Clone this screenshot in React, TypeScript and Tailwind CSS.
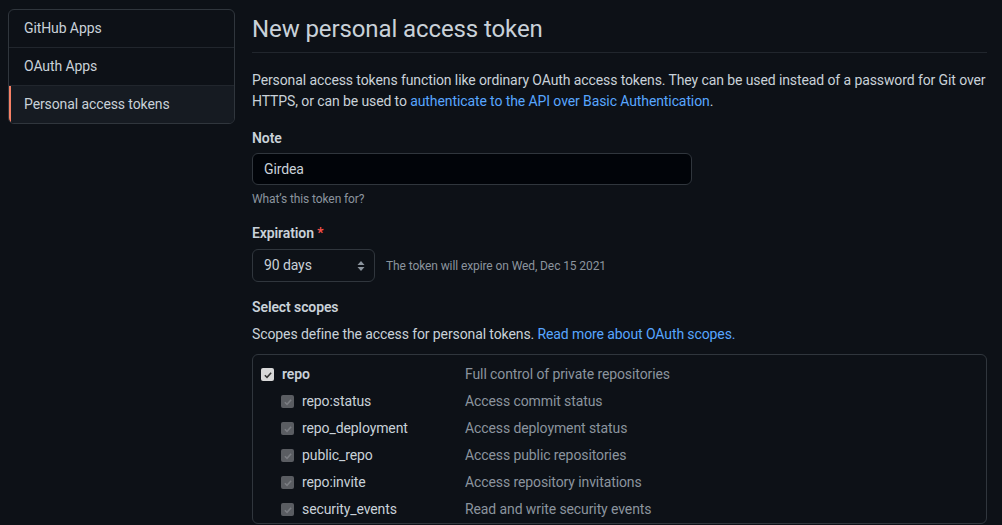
const scopes = [
  { name: "repo:status", desc: "Access commit status" },
  { name: "repo_deployment", desc: "Access deployment status" },
  { name: "public_repo", desc: "Access public repositories" },
  { name: "repo:invite", desc: "Access repository invitations" },
  { name: "security_events", desc: "Read and write security events" },
];

function Check({ disabled }: { disabled?: boolean }) {
  return (
    <span
      className={
        "flex h-[13px] w-[13px] items-center justify-center rounded-[2px] " +
        (disabled ? "bg-[#5a5d62]" : "bg-[#d8d8d8]")
      }
    >
      <svg viewBox="0 0 12 12" className="h-[10px] w-[10px]">
        <path
          d="M2.2 6.3 L4.8 8.8 L9.8 3.2"
          fill="none"
          stroke={disabled ? "#7b7e83" : "#333"}
          strokeWidth="1.8"
        />
      </svg>
    </span>
  );
}

export default function App() {
  return (
    <div className="flex h-[525px] w-full gap-[17px] overflow-hidden bg-[#0d1117] pl-2 pr-[15px] pt-[9px] font-['Segoe_UI','Roboto',sans-serif] text-[14px] tracking-[-0.1px] text-[#c9d1d9]">
      {/* sidebar */}
      <nav className="h-fit w-[227px] shrink-0 overflow-hidden rounded-md border border-[#30363d]">
        <div className="flex h-[38px] items-center border-b border-[#21262d] pl-[15px]">GitHub Apps</div>
        <div className="flex h-[38px] items-center border-b border-[#21262d] pl-[15px]">OAuth Apps</div>
        <div className="flex h-[37px] items-center border-l-2 border-[#f78166] bg-[#161b22] pl-[13px]">
          Personal access tokens
        </div>
      </nav>

      {/* main */}
      <main className="min-w-0 flex-1">
        <div className="-mt-[9px] flex h-[53px] items-end border-b border-[#21262d] pb-[8px]">
          <h1 className="text-[24px] font-normal leading-[30px]">New personal access token</h1>
        </div>

        <p className="mt-[17px] whitespace-nowrap leading-[21px]">
          Personal access tokens function like ordinary OAuth access tokens. They can be used instead of a password for Git over
          <br />
          HTTPS, or can be used to{" "}
          <a className="text-[#58a6ff]">authenticate to the API over Basic Authentication</a>.
        </p>

        <div className="mt-[16px] font-semibold leading-[21px]">Note</div>
        <div className="mt-[4px] flex h-[32px] w-[440px] items-center rounded-md border border-[#30363d] bg-[#010409] px-[11px]">
          Girdea
        </div>
        <div className="mt-[5px] text-[12px] leading-[18px] text-[#8b949e]">What’s this token for?</div>

        <div className="mt-[15px] font-semibold leading-[21px]">
          Expiration <span className="text-[#f85149]">*</span>
        </div>
        <div className="mt-[5px] flex items-center gap-[11px]">
          <div className="flex h-[33px] w-[123px] items-center justify-between rounded-md border border-[#30363d] bg-[#0d1117] pl-[11px] pr-[9px]">
            <span>90 days</span>
            <svg viewBox="0 0 8 12" className="h-[12px] w-[8px]">
              <path d="M4 1 L7.5 5 L0.5 5 Z M4 11 L7.5 7 L0.5 7 Z" fill="#8b949e" />
            </svg>
          </div>
          <span className="text-[12px] text-[#8b949e]">The token will expire on Wed, Dec 15 2021</span>
        </div>

        <div className="mt-[15px] font-semibold leading-[21px]">Select scopes</div>
        <p className="mt-[6px] leading-[21px]">
          Scopes define the access for personal tokens.{" "}
          <a className="text-[#58a6ff]">Read more about OAuth scopes.</a>
        </p>

        <div className="mt-[9px] rounded-md border border-[#30363d] pl-[8px] pt-[6px]">
          <div className="flex h-[27px] items-center">
            <div className="flex w-[204px] items-center gap-[8px]">
              <Check />
              <span className="font-semibold">repo</span>
            </div>
            <span className="text-[#8b949e]">Full control of private repositories</span>
          </div>
          {scopes.map((s) => (
            <div key={s.name} className="flex h-[27px] items-center">
              <div className="flex w-[204px] items-center gap-[8px] pl-[20px]">
                <Check disabled />
                <span>{s.name}</span>
              </div>
              <span className="text-[#8b949e]">{s.desc}</span>
            </div>
          ))}
        </div>
      </main>
    </div>
  );
}
